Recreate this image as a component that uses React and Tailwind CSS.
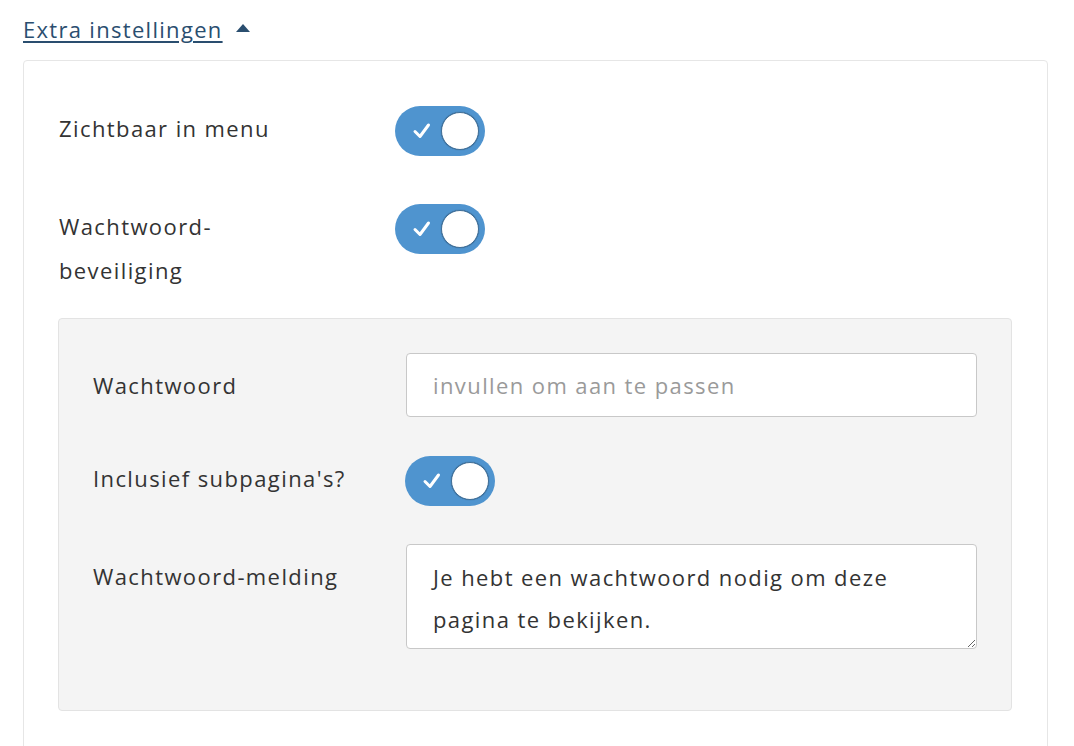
function Toggle() {
  return (
    <div className="relative w-[90px] h-[50px] rounded-full bg-[#4f94cf] shrink-0">
      <svg className="absolute left-[17px] top-[15px]" width="20" height="20" viewBox="0 0 20 20">
        <path d="M3 10.5 L8 15.5 L16.5 4" fill="none" stroke="white" strokeWidth="3" strokeLinecap="round" strokeLinejoin="round" />
      </svg>
      <div className="absolute right-[6px] top-[6px] w-[38px] h-[38px] rounded-full bg-white border border-[#3f6f99] shadow-[0_0_1px_rgba(0,0,0,0.4)]" />
    </div>
  )
}

function Row({ label, children, className = '', labelWidth = 'w-[336px]', labelClass = '' }) {
  return (
    <div className={`flex items-start ${className}`}>
      <div className={`${labelWidth} ${labelClass} shrink-0 text-[22px] leading-[44px] text-[#333]`}>{label}</div>
      {children}
    </div>
  )
}

export default function App() {
  return (
    <div className="bg-white min-h-[746px] overflow-hidden font-['Open_Sans',sans-serif] tracking-[1.4px] text-[#333]">
      <div className="px-[23px] pt-[12px]">
        <button className="flex items-center gap-[13px] text-[22px] leading-[34px] text-[#2a4e6f] tracking-[1.3px]">
          <span className="underline underline-offset-[3px] decoration-[2px]">Extra instellingen</span>
          <svg width="14" height="8" viewBox="0 0 14 8" className="mt-[-2px]">
            <path d="M0 8 L7 0 L14 8 Z" fill="#2a4e6f" />
          </svg>
        </button>

        <div className="mt-[14px] mr-[3px] border border-[#e6e6e6] rounded-[4px] px-[35px] pt-[45px] pb-[40px]">
          <Row label="Zichtbaar in menu" className="mb-[48px]">
            <Toggle />
          </Row>
          <Row label={<>Wachtwoord-<br />beveiliging</>} className="mb-[26px]">
            <Toggle />
          </Row>

          <div className="bg-[#f4f4f4] border border-[#e3e3e3] rounded-[4px] px-[34px] pt-[34px] pb-[61px] -ml-px">
            <Row label="Wachtwoord" labelWidth="w-[313px]" labelClass="pt-[10px]" className="mb-[39px]">
              <div className="flex-1 h-[64px] bg-white border border-[#c8c8c8] rounded-[4px] flex items-center px-[26px] text-[22px] text-[#9a9a9a]">
                invullen om aan te passen
              </div>
            </Row>
            <Row label="Inclusief subpagina's?" labelWidth="w-[312px]" className="mb-[38px]">
              <Toggle />
            </Row>
            <Row label="Wachtwoord-melding" labelWidth="w-[313px]" labelClass="pt-[10px]">
              <textarea
                className="flex-1 h-[105px] bg-white border border-[#c8c8c8] rounded-[4px] px-[26px] pt-[11px] text-[22px] leading-[42px] text-[#333] outline-none"
                defaultValue="Je hebt een wachtwoord nodig om deze pagina te bekijken."
              />
            </Row>
          </div>
        </div>
      </div>
    </div>
  )
}
